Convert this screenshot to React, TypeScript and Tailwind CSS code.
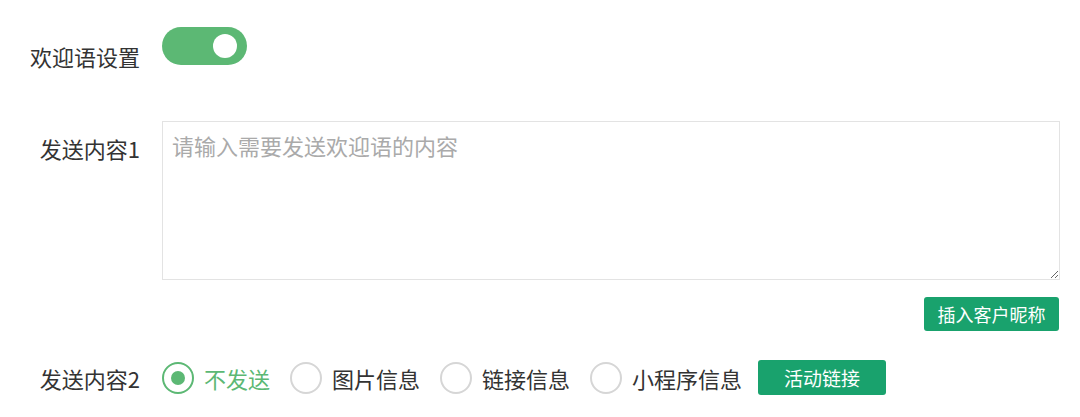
import React, { useState } from 'react';

const options = ['不发送', '图片信息', '链接信息', '小程序信息'];

const Radio: React.FC<{ label: string; checked: boolean; onClick: () => void }> = ({ label, checked, onClick }) => (
  <label onClick={onClick} className="flex items-center gap-[10px] cursor-pointer">
    <span
      className={`w-[32px] h-[32px] rounded-full border-2 flex items-center justify-center ${
        checked ? 'border-[#5cb874]' : 'border-[#d6d6d6]'
      }`}
    >
      {checked && <span className="w-[14px] h-[14px] rounded-full bg-[#5cb874]" />}
    </span>
    <span className={`text-[22px] leading-[30px] ${checked ? 'text-[#5cb874]' : 'text-[#333]'}`}>{label}</span>
  </label>
);

export default function App() {
  const [on, setOn] = useState(true);
  const [choice, setChoice] = useState(0);

  return (
    <div className="w-[1080px] h-[417px] bg-white font-['Noto_Sans_CJK_SC','Noto_Sans',sans-serif] text-[#333] pt-[27px]">
      {/* 欢迎语开关 */}
      <div className="flex gap-[22px]">
        <div className="w-[140px] text-right text-[22px] leading-[30px] mt-[14px]">欢迎语设置</div>
        <button
          onClick={() => setOn(!on)}
          className={`w-[85px] h-[38px] rounded-full flex items-center px-[10px] ${
            on ? 'bg-[#5cb874] justify-end' : 'bg-[#ccc] justify-start'
          }`}
        >
          <span className="w-[24px] h-[24px] rounded-full bg-white block" />
        </button>
      </div>

      {/* 发送内容1 */}
      <div className="flex gap-[22px] mt-[50px]">
        <div className="w-[140px] text-right text-[22px] leading-[30px] mt-[12px]">发送内容1</div>
        <textarea
          placeholder="请输入需要发送欢迎语的内容"
          className="w-[898px] h-[159px] border border-[#e3e3e3] pl-[9px] pr-[10px] py-[8px] text-[22px] leading-[30px] outline-none placeholder:text-[#aaa]"
        />
      </div>
      <div className="flex justify-end w-[1059px] mt-[17px]">
        <button className="w-[135px] h-[34px] rounded-[3px] bg-[#19a26d] text-white text-[18px] leading-none">
          插入客户昵称
        </button>
      </div>

      {/* 发送内容2 */}
      <div className="flex items-center gap-[22px] mt-[29px]">
        <div className="w-[140px] text-right text-[22px] leading-[30px]">发送内容2</div>
        <div className="flex items-center gap-[20px]">
          {options.map((o, i) => (
            <Radio key={o} label={o} checked={choice === i} onClick={() => setChoice(i)} />
          ))}
          <button className="w-[128px] h-[35px] rounded-[3px] bg-[#19a26d] text-white text-[19px] leading-none -ml-[4px]">
            活动链接
          </button>
        </div>
      </div>
    </div>
  );
}
